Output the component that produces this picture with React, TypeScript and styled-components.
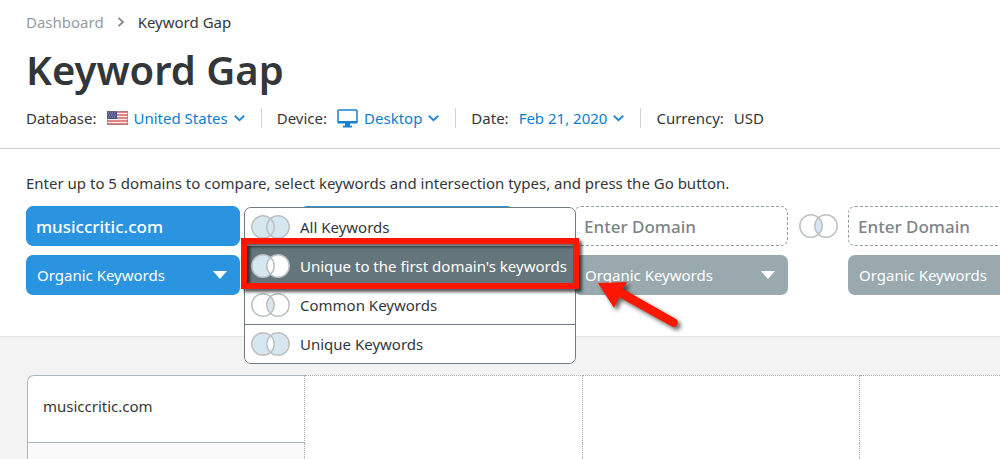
import React from "react";
import styled, { createGlobalStyle, css } from "styled-components";

const GlobalStyle = createGlobalStyle`
  *, *::before, *::after { box-sizing: border-box; }
  body { margin: 0; background: #f3f3f3; color: #333739; }
  body, button, input, select {
    font-family: "Noto Sans", "Open Sans", sans-serif;
    font-size: 15px;
    line-height: 20px;
  }
  svg { flex-shrink: 0; }
`;

const Page = styled.div`
  min-height: 100vh;
  overflow: clip;
`;

const Header = styled.header`
  padding: 12px 26px 20px;
  background: #fff;
  border-bottom: 1px solid #c9cbcc;
`;

const Breadcrumb = styled.nav`
  display: flex;
  align-items: center;
  gap: 13px;
`;

const CrumbLink = styled.a`
  color: #939c9f;
  text-decoration: none;
`;

const Title = styled.h1`
  margin: 12px 0;
  font-size: 40px;
  line-height: 52px;
  font-weight: 600;
`;

const Filters = styled.div`
  display: flex;
  align-items: center;
`;

const Filter = styled.div`
  display: flex;
  align-items: center;
  gap: 10px;
  height: 20px;
  white-space: nowrap;
  & + & {
    margin-left: 16px;
    padding-left: 15px;
    border-left: 1px solid #ccd2d4;
  }
`;

const FilterButton = styled.button`
  display: flex;
  align-items: center;
  gap: 6px;
  padding: 0;
  border: 0;
  background: none;
  color: #0f7dce;
  cursor: pointer;
`;

const Form = styled.section`
  padding: 23px 26px 41px;
  background: #fff;
  border-bottom: 1px solid #e0e2e3;
`;

const Hint = styled.p`
  margin: 0 0 12px;
  line-height: 22px;
  white-space: nowrap;
`;

const DomainRow = styled.div`
  display: flex;
`;

const Domain = styled.div`
  flex: 0 0 214px;
  display: grid;
  gap: 9px;
`;

const fieldShape = css`
  width: 100%;
  height: 40px;
  border-radius: 7px;
  outline: none;
`;

const DomainInput = styled.input<{ $filled: boolean }>`
  ${fieldShape}
  padding: 0 9px;
  font-size: 17px;
  font-weight: 500;
  border: ${(p) => (p.$filled ? "1px solid #2b94e1" : "1px dashed #929ea2")};
  background: ${(p) => (p.$filled ? "#2b94e1" : "#fff")};
  color: ${(p) => (p.$filled ? "#fff" : "#333739")};
  &::placeholder { color: #7c8688; opacity: 1; }
`;

const SelectWrap = styled.div`
  display: grid;
  align-items: center;
  > * { grid-area: 1 / 1; }
  > svg { justify-self: end; margin-right: 13px; pointer-events: none; }
`;

const KeywordSelect = styled.select<{ $filled: boolean }>`
  ${fieldShape}
  appearance: none;
  padding: 0 11px;
  border: 0;
  background: ${(p) => (p.$filled ? "#2b94e1" : "#99a9ae")};
  color: #fff;
`;

const Connector = styled.div`
  position: relative;
  flex: 0 0 60px;
  height: 40px;
  display: flex;
  align-items: center;
  justify-content: center;
`;

const ConnectorButton = styled.button`
  display: flex;
  padding: 0;
  border: 0;
  background: none;
`;

const Menu = styled.div`
  position: absolute;
  z-index: 2;
  top: 1px;
  left: 4px;
  width: 332px;
  border: 1px solid #6c7b80;
  border-radius: 7px;
  background: #fff;
`;

const MenuItem = styled.button<{ $active?: boolean }>`
  position: relative;
  z-index: ${(p) => (p.$active ? 1 : 0)};
  display: flex;
  align-items: center;
  gap: 10px;
  width: 100%;
  height: 38px;
  padding: 0 6px;
  border: 0;
  border-radius: ${(p) => (p.$active ? "0" : "7px")};
  background: ${(p) => (p.$active ? "#64767c" : "#fff")};
  color: ${(p) => (p.$active ? "#fff" : "#333739")};
  white-space: nowrap;
`;

const MenuRule = styled.div`
  height: 1px;
  background: #6c7b80;
`;

const Callout = styled.span`
  position: absolute;
  inset: -9px -4px -4px;
  border: 6px solid #fd1600;
  box-shadow: 3px 3px 3px rgba(0, 0, 0, 0.65), inset 3px 3px 3px rgba(0, 0, 0, 0.6);
`;

const Arrow = styled.svg`
  position: absolute;
  z-index: 3;
  top: 71px;
  left: 352px;
  overflow: visible;
  filter: drop-shadow(3px 3px 2px rgba(0, 0, 0, 0.6));
  pointer-events: none;
`;

const Results = styled.section`
  padding: 38px 27px 0;
`;

const Table = styled.table`
  width: 1389px;
  table-layout: fixed;
  border-collapse: separate;
  border-spacing: 0;
`;

const Cell = styled.td`
  height: 16px;
  padding: 0;
  background: #fff;
  border-right: 1px dotted #a4acaf;
`;

const HeadCell = styled.th`
  height: 68px;
  padding: 0 15px 6px;
  background: #fff;
  border-top: 1px dotted #a4acaf;
  border-right: 1px dotted #a4acaf;
  font-weight: 400;
  text-align: left;
  &:first-child {
    border-top: 1px solid #adb6ba;
    border-left: 1px solid #adb6ba;
    border-bottom: 1px solid #adb6ba;
    border-top-left-radius: 7px;
  }
`;

const FirstCell = styled(Cell)`
  background: #fafafa;
  border-left: 1px solid #adb6ba;
`;

const Chevron = () => (
  <svg width="11" height="8" viewBox="0 0 11 8" fill="none" stroke="#2487d6" strokeWidth="1.9" aria-hidden="true">
    <path d="M.8 1.8 5.5 6.2 10.2 1.8" />
  </svg>
);

const CrumbChevron = () => (
  <svg width="8" height="10" viewBox="0 0 8 10" fill="none" stroke="#7e898d" strokeWidth="1.8" aria-hidden="true">
    <path d="M1.5 .8 6 5 1.5 9.2" />
  </svg>
);

const Flag = () => (
  <svg width="21" height="14" viewBox="0 0 21 14" aria-hidden="true">
    <rect width="21" height="14" fill="#f7eeee" />
    <path d="M0 1h21M0 4h21M0 7h21M0 10h21M0 13h21" stroke="#d9605f" strokeWidth="1.5" />
    <rect width="10" height="8" fill="#4c5285" />
    <path d="M1 2h8M2 4h7M1 6h8" stroke="#aab0cb" strokeWidth=".8" strokeDasharray="1 1" />
    <rect x=".5" y=".5" width="20" height="13" fill="none" stroke="#8b6b7b" strokeOpacity=".5" />
  </svg>
);

const Monitor = () => (
  <svg width="21" height="19" viewBox="0 0 21 19" aria-hidden="true">
    <rect x="1" y="1" width="19" height="12" rx="1" fill="none" stroke="#1780cf" strokeWidth="1.5" />
    <path d="M.5 12h20v1.5a1 1 0 0 1-1 1h-18a1 1 0 0 1-1-1zM8 14h5v2.7h2V18.5H6V16.7h2z" fill="#1780cf" />
  </svg>
);

const Triangle = () => (
  <svg width="14" height="8" viewBox="0 0 14 8" aria-hidden="true">
    <path d="M0 0h14L7 8z" fill="#fff" />
  </svg>
);

type VennKind = "all" | "first" | "common" | "unique";
const TINT = "#d7e7ef";

const Venn = ({ kind }: { kind: VennKind }) => {
  const left = kind === "common" ? "#fff" : TINT;
  const right = kind === "all" || kind === "unique" ? TINT : "#fff";
  const lens = kind === "all" || kind === "common" ? TINT : "#fff";
  return (
    <svg width="39" height="24" viewBox="0 0 39 24" aria-hidden="true">
      <circle cx="12" cy="12" r="11.2" fill={left} />
      <circle cx="27" cy="12" r="11.2" fill={right} />
      <path d="M19.5 3.7A11.2 11.2 0 0 1 19.5 20.3A11.2 11.2 0 0 1 19.5 3.7z" fill={lens} />
      <g fill="none" stroke="#bcc1c3" strokeWidth="1.5">
        <circle cx="12" cy="12" r="11.2" />
        <circle cx="27" cy="12" r="11.2" />
      </g>
    </svg>
  );
};

const OPTIONS: { kind: VennKind; label: string }[] = [
  { kind: "all", label: "All Keywords" },
  { kind: "first", label: "Unique to the first domain's keywords" },
  { kind: "common", label: "Common Keywords" },
  { kind: "unique", label: "Unique Keywords" },
];

const IntersectionMenu = () => (
  <Menu role="menu">
    {OPTIONS.map((o, i) => (
      <React.Fragment key={o.kind}>
        {i > 0 && <MenuRule />}
        <MenuItem role="menuitem" $active={o.kind === "first"}>
          <Venn kind={o.kind} />
          {o.label}
          {o.kind === "first" && <Callout />}
        </MenuItem>
      </React.Fragment>
    ))}
  </Menu>
);

const DomainField = ({ index, value = "", filled = false }: { index: number; value?: string; filled?: boolean }) => (
  <Domain>
    <DomainInput
      aria-label={`Domain ${index}`}
      $filled={filled}
      defaultValue={value}
      placeholder={filled ? undefined : "Enter Domain"}
    />
    <SelectWrap>
      <KeywordSelect aria-label={`Keyword type ${index}`} $filled={filled}>
        <option>Organic Keywords</option>
      </KeywordSelect>
      <Triangle />
    </SelectWrap>
  </Domain>
);

const PlainConnector = () => (
  <Connector>
    <ConnectorButton aria-label="Intersection type">
      <Venn kind="common" />
    </ConnectorButton>
  </Connector>
);

export default function App() {
  return (
    <Page>
      <GlobalStyle />
      <Header>
        <Breadcrumb aria-label="Breadcrumb">
          <CrumbLink href="#">Dashboard</CrumbLink>
          <CrumbChevron />
          <span>Keyword Gap</span>
        </Breadcrumb>
        <Title>Keyword Gap</Title>
        <Filters>
          <Filter>
            Database:
            <FilterButton><Flag />United States<Chevron /></FilterButton>
          </Filter>
          <Filter>
            Device:
            <FilterButton><Monitor />Desktop<Chevron /></FilterButton>
          </Filter>
          <Filter>
            Date:
            <FilterButton>Feb 21, 2020<Chevron /></FilterButton>
          </Filter>
          <Filter>
            Currency:
            <span>USD</span>
          </Filter>
        </Filters>
      </Header>
      <Form>
        <Hint>Enter up to 5 domains to compare, select keywords and intersection types, and press the Go button.</Hint>
        <DomainRow>
          <DomainField index={1} value="musiccritic.com" filled />
          <Connector>
            <IntersectionMenu />
            <Arrow width="90" height="50" viewBox="0 0 90 50" aria-hidden="true">
              <path d="M6 6 35 5 31 12 84 42 A4.5 4.5 0 0 1 81 50 L27 20 22 31z" fill="#fd1600" />
            </Arrow>
          </Connector>
          <DomainField index={2} filled />
          <PlainConnector />
          <DomainField index={3} />
          <PlainConnector />
          <DomainField index={4} />
          <PlainConnector />
          <DomainField index={5} />
        </DomainRow>
      </Form>
      <Results>
        <Table>
          <thead>
            <tr>
              <HeadCell scope="col">musiccritic.com</HeadCell>
              <HeadCell /><HeadCell /><HeadCell /><HeadCell />
            </tr>
          </thead>
          <tbody>
            <tr>
              <FirstCell /><Cell /><Cell /><Cell /><Cell />
            </tr>
          </tbody>
        </Table>
      </Results>
    </Page>
  );
}
